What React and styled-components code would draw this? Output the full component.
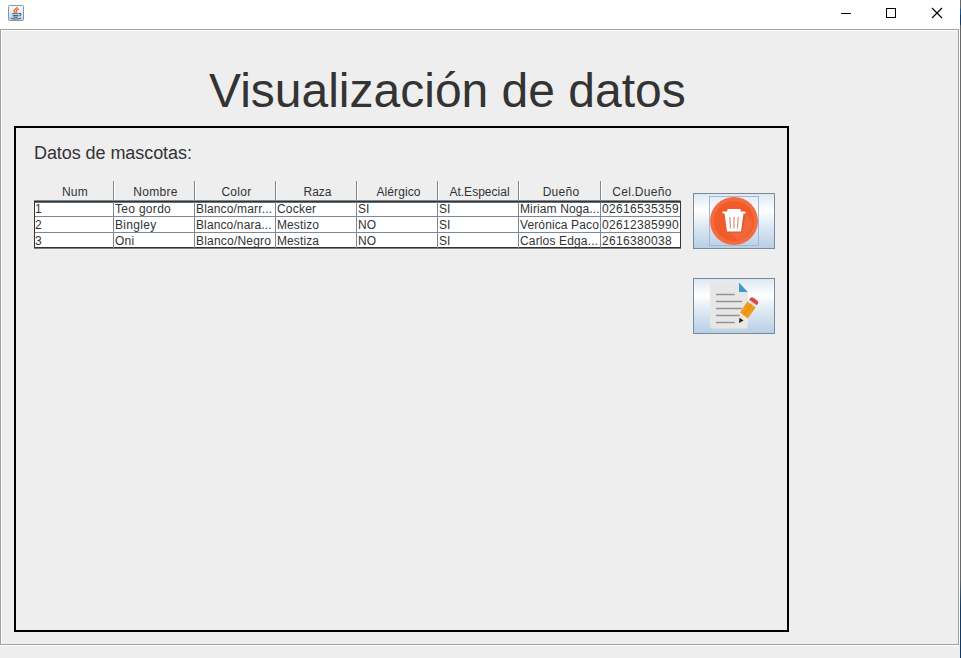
import React from "react";
import styled, { createGlobalStyle } from "styled-components";

const Global = createGlobalStyle`
  * { box-sizing: border-box; }
  body { margin: 0; background: #eee; font-family: "Liberation Sans", Arial, sans-serif; color: #333; overflow: hidden; }
`;
const Screen = styled.div`
  display: grid; grid-template-columns: 960px 1px; width: 961px; height: 658px;
`;
const DesktopEdge = styled.div`
  background: linear-gradient(#666 0 8px, #16588f 9px 14px, #123a66 15px 24px, #666 26px 580px, #3f5568 590px, #103866 608px);
`;
const Window = styled.div`
  height: 658px; display: flex; flex-direction: column; background: #eee;
`;
const TitleBar = styled.header`
  height: 29px; flex: none; background: #fff; display: flex; justify-content: space-between;
`;
const AppIcon = styled.svg`width: 16px; height: 16px; margin: 5px 0 0 8px;`;
const Controls = styled.svg`width: 137px; height: 28px;`;
const Frame = styled.main`
  height: 617px; flex: none;
  border: 1px solid #fff; border-width: 0 1px 1px 0;
  display: flex;
`;
const FrameInner = styled.div`
  flex: 1; border: 1px solid #a0a0a0; box-shadow: inset 1px 1px 0 #fff; padding: 0 0 0 13px;
`;
const Title = styled.h1`
  margin: 0; padding: 33px 0 0 195px; height: 96px; font-weight: 400; font-size: 48px; line-height: 55px;
  white-space: nowrap;
`;
const Panel = styled.section`
  width: 775px; height: 506px; border: 2px solid #000; padding: 15px 12px 0 18px;
`;
const Subtitle = styled.h2`
  margin: 0; height: 37px; font-size: 18px; line-height: 21px; font-weight: 400; letter-spacing: -0.07px;
`;
const Row = styled.div`display: flex; justify-content: space-between; align-items: flex-start;`;
const Table = styled.div`
  width: 647px; font-size: 12px; line-height: 15px;
  display: grid; grid-template-columns: 80px 81px 81px 81px 81px 81px 82px 80px;
`;
const HeadCell = styled.div`
  height: 20px; margin-top: 1px; padding: 4px 0 0 3px; text-align: center; white-space: nowrap;
  letter-spacing: ${(p) => p.$ls}px;
  border-right: 1px solid ${(p) => (p.$last ? "transparent" : "#7a8a99")};
  border-bottom: 1px solid #7a8a99;
  box-shadow: ${(p) => (p.$first ? "none" : "inset 1px 0 0 #fff")};
`;
const Body = styled.div`
  grid-column: 1 / -1; background: #fff;
  border: 1px solid #333; box-shadow: inset 0 1px 0 #66706f, 0 1px 0 #7b807e;
`;
const BodyRow = styled.div`
  display: grid; grid-template-columns: 79px 81px 81px 81px 81px 81px 82px 79px;
  height: ${(p) => (p.$last ? 14 : p.$first ? 15 : 16)}px;
  border-bottom: ${(p) => (p.$last ? "0" : "1px solid #7a8a99")};
`;
const Cell = styled.div`
  white-space: nowrap; padding-left: ${(p) => (p.$first ? 0 : 1)}px;
  line-height: ${(p) => (p.$top ? 14 : 16)}px;
  letter-spacing: ${(p) => p.$ls}px;
  border-right: 1px solid ${(p) => (p.$last ? "transparent" : "#7a8a99")};
`;
const Actions = styled.div`display: flex; flex-direction: column; gap: 29px; padding-top: 13px;`;
const ActionButton = styled.button`
  width: 82px; height: 56px; border: 1px solid #7a8a99; padding: 0; display: flex;
  align-items: center; justify-content: center;
  background: linear-gradient(#dde8f3 0%, #fff 30%, #dde8f3 60%, #b8cfe5 100%);
`;
const Glyph = styled.svg`width: 50px; height: 50px; flex: none;`;

const heads = [
  ["Num", 0.3], ["Nombre", 0.3], ["Color", 0.3], ["Raza", 0],
  ["Alérgico", 0.1], ["At.Especial", 0.02], ["Dueño", 0.25], ["Cel.Dueño", 0.3],
];
const rows = [
  [["1"], ["Teo gordo", 0.3], ["Blanco/marr...", 0.15], ["Cocker", 0.2], ["SI"], ["SI"], ["Miriam Noga...", 0.12], ["02616535359", 0.33]],
  [["2"], ["Bingley", 0.3], ["Blanco/nara...", 0.12], ["Mestizo", 0.1], ["NO"], ["SI"], ["Verónica Paco", 0.12], ["02612385990", 0.33]],
  [["3"], ["Oni", 0.2], ["Blanco/Negro", 0.2], ["Mestiza", 0.1], ["NO"], ["SI"], ["Carlos Edga...", 0.15], ["2616380038", 0.33]],
];

function JavaIcon() {
  return (
    <AppIcon viewBox="0 0 16 16">
      <defs><linearGradient id="jv" x2="0" y2="1"><stop stopColor="#fff" /><stop offset="1" stopColor="#c3d3e0" /></linearGradient></defs>
      <rect x=".5" y=".5" width="15" height="15" rx="1" fill="url(#jv)" stroke="#7d98b0" />
      <path d="M9 1.800C9.500 3.800 5 4.500 6 6.400L7.400 8M10.800 4C8 4.800 7.800 6 8.700 8" fill="none" stroke="#e8762b" strokeWidth="1.400" />
      <path d="M3.800 8.800H10.800M4.800 10.600H10.300M11 8.600C13.700 8 13.500 10.300 11 10.900M5.200 12.200H9.800M2.800 12.800C4 14.400 11 14.400 13 13" fill="none" stroke="#41698c" strokeWidth="1.100" />
    </AppIcon>
  );
}

function TrashIcon() {
  return (
    <Glyph viewBox="0 0 50 50">
      <rect x=".5" y=".5" width="49" height="49" fill="none" stroke="#a3b8cc" />
      <circle cx="25" cy="25" r="24" fill="#f26c40" />
      <circle cx="25" cy="25" r="20" fill="#f15a29" />
      <path d="M36 17L43.500 25A20 20 0 0 1 29 44.500L20 36Z" fill="#f3653a" />
      <path d="M15 18.500L18.500 36.500H33L36.500 19Z" fill="#c94f28" opacity=".55" />
      <path d="M13.500 15.500H18L18.700 13H31.300L32 15.500H36.500V17.500H34.500L32 35.500H18L15.500 17.500H13.500Z" fill="#fff" />
      <path d="M20.800 21L21.500 32.500M25 21V32.500M29.200 21L28.500 32.500" stroke="#e0977c" strokeWidth="1.300" />
    </Glyph>
  );
}

function EditIcon() {
  return (
    <Glyph viewBox="0 0 50 50">
      <path d="M3 1.700H30L39 11V46Q39 48.300 37 48.300H3Q1 48.300 1 46V4Q1 1.700 3 1.700Z" fill="#e7e7e7" />
      <path d="M1 45.500Q1 48 3 48H37Q39 48 39 45.500" fill="none" stroke="#cfd0d1" />
      <path d="M30 1.500L38.700 11H30Z" fill="#3d9acb" />
      <path d="M7 13.500H25.700M7 20.500H33M7 27.500H33M7 34.500H31M7 41.500H25.700" stroke="#929292" strokeWidth="1.600" />
      <path d="M38.300 20.500L46.700 26.500L38.700 37.500L31 31.500Z" fill="#f09b18" />
      <path d="M42.500 23.500L34.500 34.500" stroke="#d88613" />
      <path d="M41 17.500Q42.500 15.500 44.500 16.800L48.500 19.700Q50 21 48.700 23L47.800 24.300L40 18.800Z" fill="#e5424a" />
      <path d="M39.300 19.500L47.300 25.300" stroke="#e3e6e8" strokeWidth="2" />
      <path d="M31 31.500L38.700 37.500L30 42Z" fill="#f7e9d8" />
      <path d="M30.500 36.800L34.500 39.500L30 42Z" fill="#222" />
    </Glyph>
  );
}

export default function App() {
  return (
    <Screen>
      <Global />
      <Window>
        <TitleBar>
          <JavaIcon />
          <Controls viewBox="0 0 137 28" shapeRendering="crispEdges">
            <path d="M18 13.500H28" stroke="#000" />
            <rect x="63.500" y="8.500" width="9" height="9" fill="none" stroke="#000" />
            <path d="M109 8L119 18M119 8L109 18" stroke="#000" strokeWidth="1.150" shapeRendering="auto" />
          </Controls>
        </TitleBar>
        <Frame>
          <FrameInner>
            <Title>Visualización de datos</Title>
            <Panel>
              <Subtitle>Datos de mascotas:</Subtitle>
              <Row>
                <Table>
                  {heads.map(([h, ls], i) => (
                    <HeadCell key={h} $ls={ls} $first={i === 0} $last={i === 7}>{h}</HeadCell>
                  ))}
                  <Body>
                    {rows.map((r, y) => (
                      <BodyRow key={y} $first={y === 0} $last={y === 2}>
                        {r.map(([c, ls = 0], i) => (
                          <Cell key={i} $ls={ls} $top={y === 0} $first={i === 0} $last={i === 7}>{c}</Cell>
                        ))}
                      </BodyRow>
                    ))}
                  </Body>
                </Table>
                <Actions>
                  <ActionButton aria-label="Eliminar"><TrashIcon /></ActionButton>
                  <ActionButton aria-label="Editar"><EditIcon /></ActionButton>
                </Actions>
              </Row>
            </Panel>
          </FrameInner>
        </Frame>
      </Window>
      <DesktopEdge />
    </Screen>
  );
}
